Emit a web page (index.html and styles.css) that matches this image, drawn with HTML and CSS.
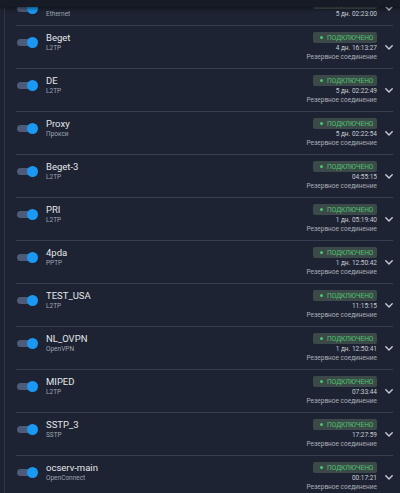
FILE: index.html
```html
<!DOCTYPE html>
<html lang="ru">
<head>
<meta charset="utf-8">
<link rel="stylesheet" href="styles.css">
</head>
<body>
<div class="topbar"></div>
<div class="page">
  <ul class="list">
    <li class="row first">
      <div class="left"><span class="toggle"></span><div class="info"><div class="name">&nbsp;</div><div class="type">Ethernet</div></div></div>
      <div class="right"><span class="badge">ПОДКЛЮЧЕНО</span><span class="time">5 дн. 02:23:00</span></div>
      <svg class="chev" viewBox="0 0 8 5"><path d="M0.8 0.8 L4 4 L7.2 0.8"/></svg>
    </li>
    <li class="row">
      <div class="left"><span class="toggle"></span><div class="info"><div class="name">Beget</div><div class="type">L2TP</div></div></div>
      <div class="right"><span class="badge">ПОДКЛЮЧЕНО</span><span class="time">4 дн. 16:13:27</span><span class="role">Резервное соединение</span></div>
      <svg class="chev" viewBox="0 0 8 5"><path d="M0.8 0.8 L4 4 L7.2 0.8"/></svg>
    </li>
    <li class="row">
      <div class="left"><span class="toggle"></span><div class="info"><div class="name">DE</div><div class="type">L2TP</div></div></div>
      <div class="right"><span class="badge">ПОДКЛЮЧЕНО</span><span class="time">5 дн. 02:22:49</span><span class="role">Резервное соединение</span></div>
      <svg class="chev" viewBox="0 0 8 5"><path d="M0.8 0.8 L4 4 L7.2 0.8"/></svg>
    </li>
    <li class="row">
      <div class="left"><span class="toggle"></span><div class="info"><div class="name">Proxy</div><div class="type">Прокси</div></div></div>
      <div class="right"><span class="badge">ПОДКЛЮЧЕНО</span><span class="time">5 дн. 02:22:54</span><span class="role">Резервное соединение</span></div>
      <svg class="chev" viewBox="0 0 8 5"><path d="M0.8 0.8 L4 4 L7.2 0.8"/></svg>
    </li>
    <li class="row">
      <div class="left"><span class="toggle"></span><div class="info"><div class="name">Beget-3</div><div class="type">L2TP</div></div></div>
      <div class="right"><span class="badge">ПОДКЛЮЧЕНО</span><span class="time">04:55:15</span><span class="role">Резервное соединение</span></div>
      <svg class="chev" viewBox="0 0 8 5"><path d="M0.8 0.8 L4 4 L7.2 0.8"/></svg>
    </li>
    <li class="row">
      <div class="left"><span class="toggle"></span><div class="info"><div class="name">PRI</div><div class="type">L2TP</div></div></div>
      <div class="right"><span class="badge">ПОДКЛЮЧЕНО</span><span class="time">1 дн. 05:19:40</span><span class="role">Резервное соединение</span></div>
      <svg class="chev" viewBox="0 0 8 5"><path d="M0.8 0.8 L4 4 L7.2 0.8"/></svg>
    </li>
    <li class="row">
      <div class="left"><span class="toggle"></span><div class="info"><div class="name">4pda</div><div class="type">PPTP</div></div></div>
      <div class="right"><span class="badge">ПОДКЛЮЧЕНО</span><span class="time">1 дн. 12:50:42</span><span class="role">Резервное соединение</span></div>
      <svg class="chev" viewBox="0 0 8 5"><path d="M0.8 0.8 L4 4 L7.2 0.8"/></svg>
    </li>
    <li class="row">
      <div class="left"><span class="toggle"></span><div class="info"><div class="name">TEST_USA</div><div class="type">L2TP</div></div></div>
      <div class="right"><span class="badge">ПОДКЛЮЧЕНО</span><span class="time">11:15:15</span><span class="role">Резервное соединение</span></div>
      <svg class="chev" viewBox="0 0 8 5"><path d="M0.8 0.8 L4 4 L7.2 0.8"/></svg>
    </li>
    <li class="row">
      <div class="left"><span class="toggle"></span><div class="info"><div class="name">NL_OVPN</div><div class="type">OpenVPN</div></div></div>
      <div class="right"><span class="badge">ПОДКЛЮЧЕНО</span><span class="time">1 дн. 12:50:41</span><span class="role">Резервное соединение</span></div>
      <svg class="chev" viewBox="0 0 8 5"><path d="M0.8 0.8 L4 4 L7.2 0.8"/></svg>
    </li>
    <li class="row">
      <div class="left"><span class="toggle"></span><div class="info"><div class="name">MIPED</div><div class="type">L2TP</div></div></div>
      <div class="right"><span class="badge">ПОДКЛЮЧЕНО</span><span class="time">07:33:44</span><span class="role">Резервное соединение</span></div>
      <svg class="chev" viewBox="0 0 8 5"><path d="M0.8 0.8 L4 4 L7.2 0.8"/></svg>
    </li>
    <li class="row">
      <div class="left"><span class="toggle"></span><div class="info"><div class="name">SSTP_3</div><div class="type">SSTP</div></div></div>
      <div class="right"><span class="badge">ПОДКЛЮЧЕНО</span><span class="time">17:27:59</span><span class="role">Резервное соединение</span></div>
      <svg class="chev" viewBox="0 0 8 5"><path d="M0.8 0.8 L4 4 L7.2 0.8"/></svg>
    </li>
    <li class="row">
      <div class="left"><span class="toggle"></span><div class="info"><div class="name">ocserv-main</div><div class="type">OpenConnect</div></div></div>
      <div class="right"><span class="badge">ПОДКЛЮЧЕНО</span><span class="time">00:17:21</span><span class="role">Резервное соединение</span></div>
      <svg class="chev" viewBox="0 0 8 5"><path d="M0.8 0.8 L4 4 L7.2 0.8"/></svg>
    </li>
  </ul>
</div>
</body>
</html>
```
FILE: styles.css
```css
html, body {
  margin: 0;
  padding: 0;
  background: #1d2332;
  height: 100%;
  overflow: hidden;
}
body {
  font-family: Roboto, "Noto Sans", sans-serif;
  color: #e2e5ea;
}
.topbar {
  position: fixed;
  top: 0;
  left: 0;
  right: 0;
  height: 7px;
  background: #161b26;
  box-shadow: 0 1px 4px rgba(0, 0, 0, 0.6);
  z-index: 2;
}
.page {
  margin-left: 4px;
  border-left: 1px solid #2f3647;
  padding-left: 11px;
  width: 377px;
  min-height: 100%;
}
.list {
  list-style: none;
  margin: -8px 0 0 0;
  padding: 0;
}
.row {
  display: flex;
  align-items: center;
  padding: 6px 0;
  border-bottom: 1px solid #373e50;
}
.left {
  align-self: flex-start;
  display: flex;
  align-items: center;
  gap: 8px;
  padding-left: 1px;
  flex: 1;
}
.toggle {
  position: relative;
  width: 21px;
  height: 11px;
  flex: none;
}
.toggle::before {
  content: "";
  position: absolute;
  left: 0;
  top: 2px;
  width: 19px;
  height: 7px;
  border-radius: 4px;
  background: #4d5a78;
}
.toggle::after {
  content: "";
  position: absolute;
  right: 0;
  top: 0;
  width: 11px;
  height: 11px;
  border-radius: 50%;
  background: #1a98f2;
}
.info {
  display: flex;
  flex-direction: column;
}
.name {
  font-size: 9.5px;
  line-height: 12px;
  color: #e4e6ea;
}
.type {
  font-size: 6.5px;
  line-height: 8px;
  color: #9ea4b0;
}
.right {
  display: flex;
  flex-direction: column;
  align-items: flex-end;
}
.badge {
  height: 11px;
  margin-bottom: 1px;
  padding: 0 6px 0 7px;
  background: #3b4a48;
  border-radius: 2px;
  display: flex;
  align-items: center;
  gap: 4px;
  font-size: 6.6px;
  color: #4ec56e;
  box-sizing: border-box;
  width: 64px;
}
.badge::before {
  content: "";
  width: 3px;
  height: 3px;
  border-radius: 50%;
  background: #4ec56e;
  flex: none;
}
.time {
  font-size: 6.5px;
  line-height: 9px;
  color: #c9ccd3;
}
.role {
  font-size: 6.5px;
  line-height: 9px;
  color: #a9aeb8;
}
.chev {
  width: 8px;
  height: 5px;
  margin-left: 8px;
  flex: none;
  fill: none;
  stroke: #c8ccd4;
  stroke-width: 1.4;
  stroke-linecap: round;
  stroke-linejoin: round;
}
```
